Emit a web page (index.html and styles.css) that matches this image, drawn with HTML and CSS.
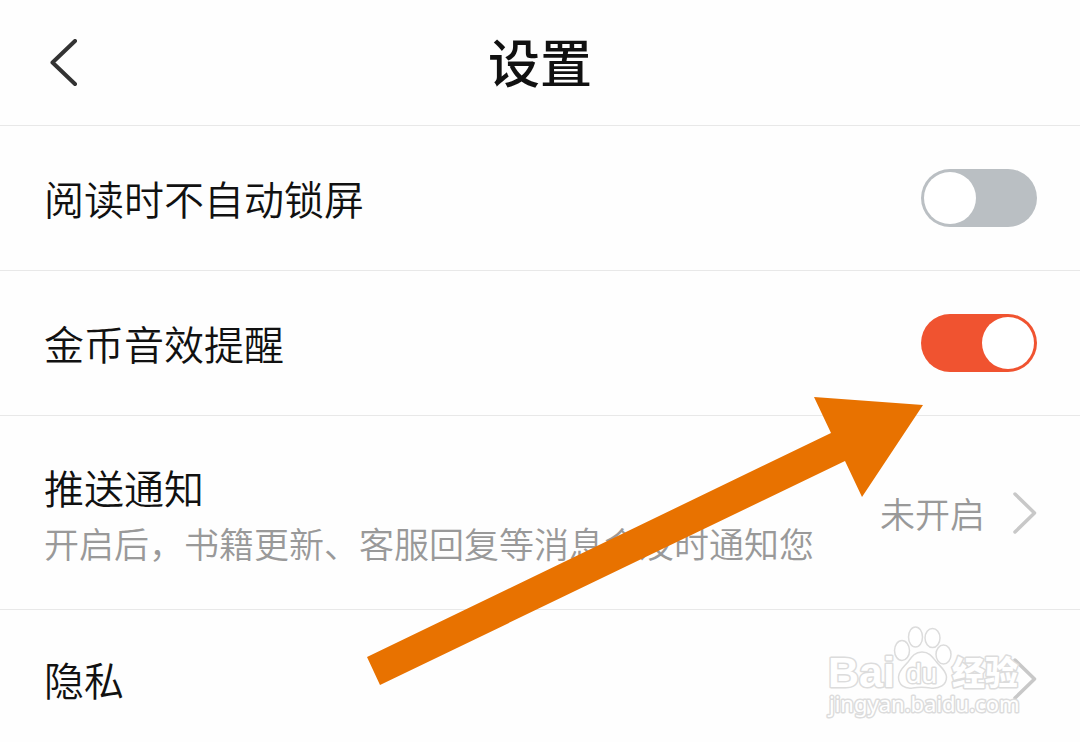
FILE: index.html
```html
<!DOCTYPE html>
<html lang="zh-CN">
<head>
<meta charset="utf-8">
<meta name="viewport" content="width=device-width, initial-scale=1">
<title>设置</title>
<link rel="stylesheet" href="styles.css">
</head>
<body>
<div class="screen">
  <header class="topbar">
    <button class="back" type="button" aria-label="返回">
      <svg width="28" height="48" viewBox="0 0 28 48"><path d="M25 2 2.500 23.500 25 45" fill="none" stroke="#333" stroke-width="4" stroke-linecap="round" stroke-linejoin="round"/></svg>
    </button>
    <h1 class="title">设置</h1>
  </header>
  <main class="settings">
    <div class="row">
      <label class="label" for="keep-awake">阅读时不自动锁屏</label>
      <input class="switch" type="checkbox" role="switch" id="keep-awake">
    </div>
    <div class="row">
      <label class="label" for="coin-sound">金币音效提醒</label>
      <input class="switch" type="checkbox" role="switch" id="coin-sound" checked>
    </div>
    <a class="row row-detail" href="#push">
      <span class="texts">
        <span class="label">推送通知</span>
        <span class="hint">开启后，书籍更新、客服回复等消息会及时通知您</span>
      </span>
      <span class="value">未开启</span>
      <svg class="chevron" width="24" height="42" viewBox="0 0 24 42"><path d="M2 2 21.500 21 2 40" fill="none" stroke="#c8c8c8" stroke-width="3.500" stroke-linecap="round" stroke-linejoin="round"/></svg>
    </a>
    <a class="row row-last" href="#privacy">
      <span class="label">隐私</span>
      <svg class="chevron" width="24" height="42" viewBox="0 0 24 42"><path d="M2 2 21.500 21 2 40" fill="none" stroke="#c8c8c8" stroke-width="3.500" stroke-linecap="round" stroke-linejoin="round"/></svg>
    </a>
  </main>

  <svg class="arrow" width="557" height="290" viewBox="366 396 557 290" aria-hidden="true">
    <path d="M923 405 814 397 831 433 367 657 380 685 845 461 862 497Z" fill="#e87200"/>
  </svg>

  <svg class="watermark" width="200" height="100" viewBox="825 622 200 100" aria-hidden="true">
    <g class="mark">
      <text class="mark-latin" x="828" y="687">Bai</text>
      <ellipse cx="902" cy="650.500" rx="7.500" ry="10"/>
      <ellipse cx="915.500" cy="637" rx="7" ry="10"/>
      <ellipse cx="932.500" cy="638" rx="7.500" ry="9.500"/>
      <ellipse cx="943.500" cy="654.500" rx="7.500" ry="9.500"/>
      <path d="M922 652c-8 0-11 6-14 10-4 5-9 8-9.500 15 0 8 6 12 14 11 6-1 12-1 18 0 9 1 16-3 16-11-.500-7-6-10-10-15-4-5-7-10-14.500-10Z"/>
      <text class="mark-du" x="906" y="683">du</text>
      <text class="mark-cjk" x="952" y="685">经验</text>
      <text class="mark-url" x="829" y="712">jingyan.baidu.com</text>
    </g>
  </svg>
</div>
</body>
</html>
```
FILE: styles.css
```css
* { box-sizing: border-box; }

body {
  margin: 0;
  background: #fefefe;
  color: #111;
  font-family: "Noto Sans CJK SC", sans-serif;
}

.screen {
  position: relative;
  min-height: 100vh;
  overflow: hidden;
}

.topbar {
  display: grid;
  grid-template-columns: 1fr auto 1fr;
  align-items: center;
  height: 126px;
  padding: 0 44px;
  border-bottom: 1px solid #e8e8e8;
}

.back {
  display: flex;
  justify-self: start;
  padding: 0 6px;
  border: 0;
  background: none;
}

.title {
  margin: 0;
  padding-bottom: 4px;
  font-size: 52px;
  font-weight: 500;
  line-height: 64px;
}

.row {
  display: flex;
  align-items: center;
  min-height: 145px;
  padding: 0 43px 0 44px;
  border-bottom: 1px solid #e8e8e8;
  color: inherit;
  text-decoration: none;
}

.row-detail { min-height: 194px; }

.row-last {
  min-height: 138px;
  border-bottom: 0;
}

.label {
  flex: 1;
  font-size: 40px;
  font-weight: 350;
  line-height: 56px;
}

.texts {
  display: flex;
  flex: 1;
  flex-direction: column;
  padding-top: 4px;
}

.hint,
.value {
  color: #999;
  font-size: 35px;
  font-weight: 350;
  line-height: 56px;
  white-space: nowrap;
}

.chevron {
  flex: none;
  margin-left: 28px;
}

.switch {
  appearance: none;
  flex: none;
  width: 116px;
  height: 58px;
  margin: 0;
  padding: 3px;
  border-radius: 29px;
  background: #babfc3;
}

.switch::before {
  content: "";
  display: block;
  width: 52px;
  height: 52px;
  border-radius: 50%;
  background: #fff;
}

.switch:checked { background: #f05330; }
.switch:checked::before { margin-left: auto; }

.arrow {
  position: absolute;
  top: 396px;
  left: 366px;
  pointer-events: none;
}

.watermark {
  position: absolute;
  top: 622px;
  right: 55px;
  pointer-events: none;
}

.mark {
  fill: #fff;
  stroke: #dcdcdc;
  stroke-width: 1.5;
}

.mark text {
  paint-order: stroke;
  stroke-width: 3;
  stroke-linejoin: round;
}

.mark-latin { font: 700 43px "Liberation Sans", sans-serif; }
.mark-du { font: 400 28px "Liberation Sans", sans-serif; }
.mark-cjk { font: 900 33px "Noto Sans CJK SC", sans-serif; }
.mark-url { font: 400 22px "Noto Sans", sans-serif; }
```
